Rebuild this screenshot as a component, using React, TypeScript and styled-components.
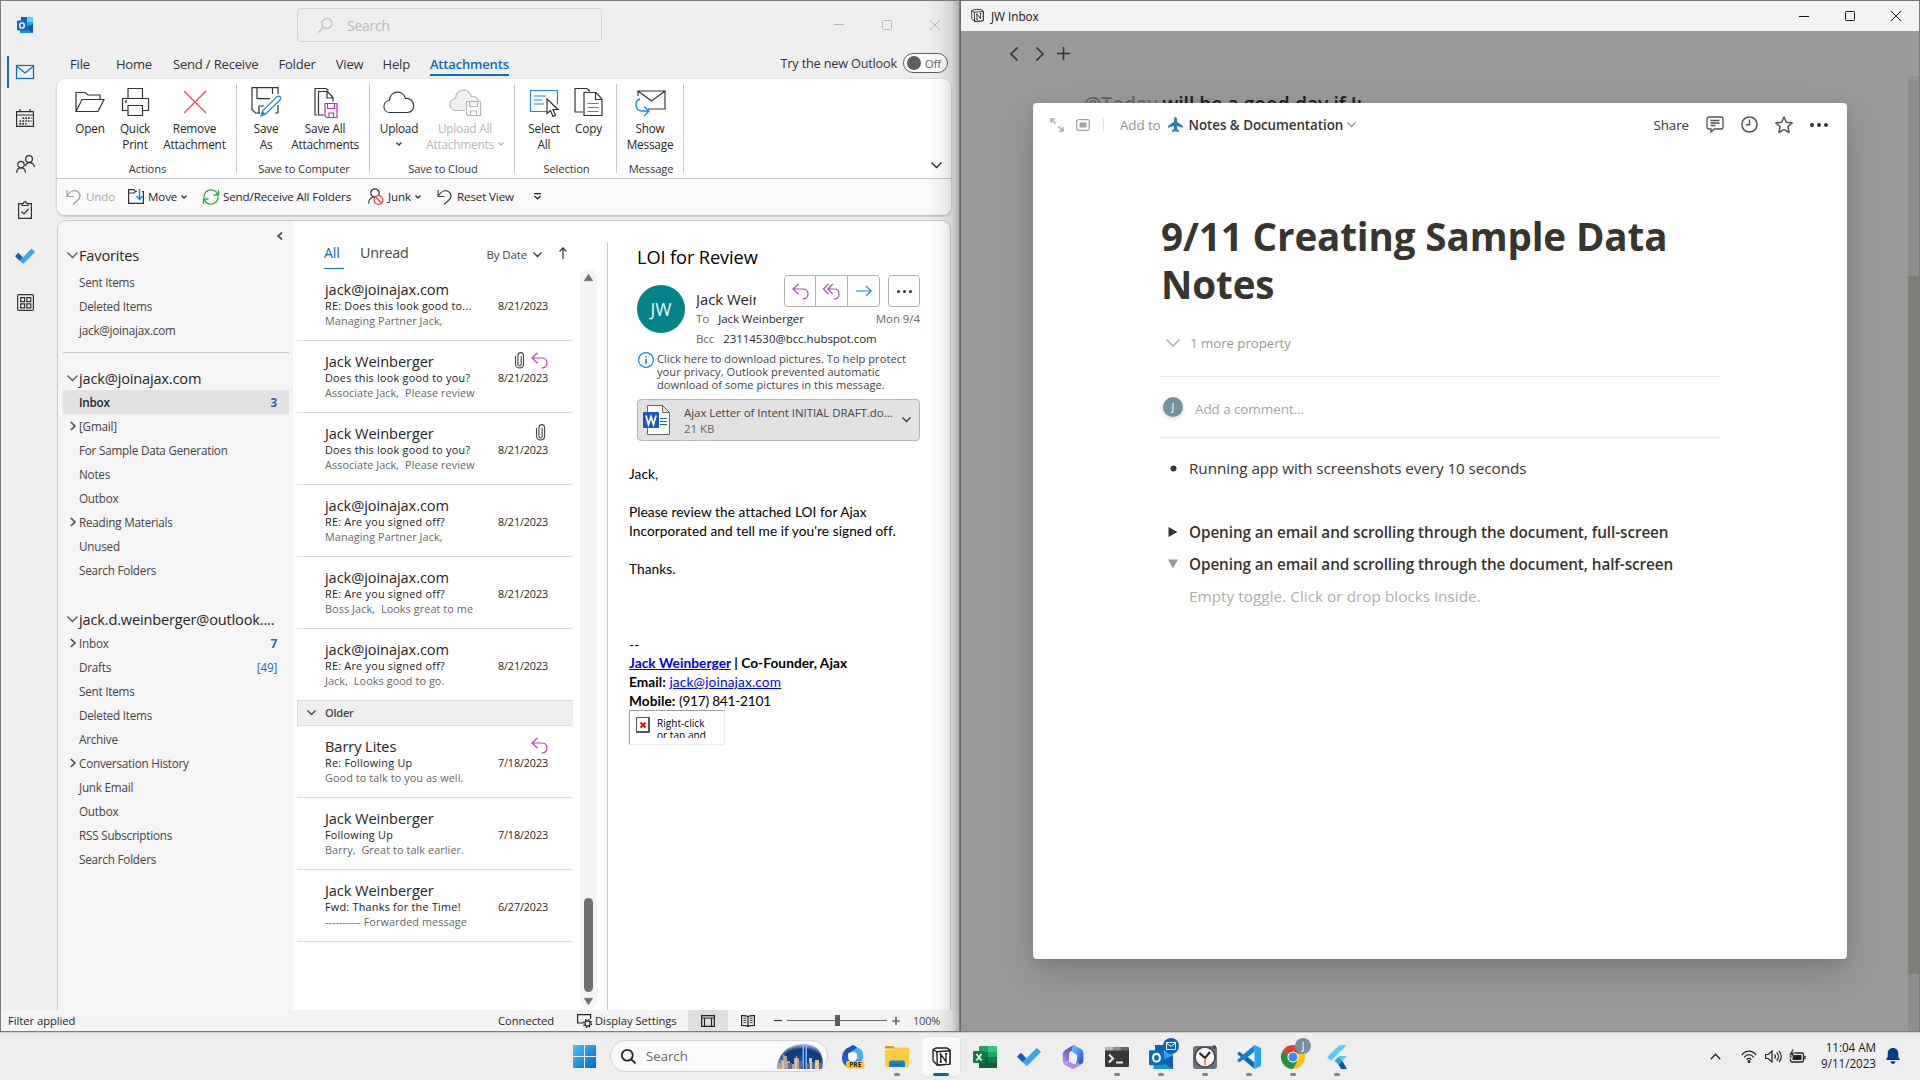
import React from 'react';
import styled, { createGlobalStyle, css } from 'styled-components';

const ui = '"Open Sans", "Noto Sans", sans-serif';

const GlobalStyle = createGlobalStyle`
  * { box-sizing: border-box; }
  body { margin: 0; background: #eee; font-family: ${ui}; overflow: hidden; }
  svg { display: block; overflow: visible; flex: none; }
`;

/* ---------- shell ---------- */

const Desktop = styled.div`
  width: 1920px;
  height: 1080px;
  display: grid;
  grid-template: 1032px 48px / 960px 960px;
  background: #eee;
`;

const OutlookWindow = styled.section`
  position: relative;
  display: grid;
  grid-template: 47px 31px 136px 5px 790px 21px / 56px 1fr;
  height: 1032px;
  background: #efefef;
  border: 1px solid #7b7b7b;
  overflow: hidden;
`;

const EdgeShade = styled.div`
  position: absolute;
  top: 0;
  right: 0;
  bottom: 0;
  width: 36px;
  background: linear-gradient(to right, rgba(0,0,0,0), rgba(0,0,0,.03) 45%, rgba(0,0,0,.11) 80%, rgba(0,0,0,.28));
`;

/* ---------- icons ---------- */

interface IcoProps { w: number; h?: number; c?: string; s?: number; children: React.ReactNode }
const Ico = ({ w, h = w, c = '#333', s = 1, children }: IcoProps) => (
  <svg width={w} height={h} viewBox={`0 0 ${w} ${h}`} fill="none" stroke={c} strokeWidth={s}>{children}</svg>
);

const Chevron = ({ c = '#333', w = 8, s = 1.3 }: { c?: string; w?: number; s?: number }) => (
  <Ico w={w} h={w / 2 + 1} c={c} s={s}><path d={`M.5 .5L${w / 2} ${w / 2}L${w - 0.5} .5`} /></Ico>
);

const Reply = ({ c = '#af4bb5' }: { c?: string }) => (
  <Ico w={17} c={c} s={1.2}><path d="M6.500.8L1 6l5.500 5.200M1 6h9.500c3.300 0 5.500 2 5.500 5s-2 5-5.500 5" /></Ico>
);
const ReplyAll = () => (
  <Ico w={17} c="#af4bb5" s={1.2}><path d="M5.500.8L.5 6l5 5.200M9.800.8L4.800 6l5 5.200M4.800 6h6c3.200 0 5.200 2 5.200 5s-2 5-5.200 5" /></Ico>
);
const Clip = () => (
  <Ico w={9} h={17} c="#444" s={1.1}><path d="M6.200 4v8.200c0 2.400-3.300 2.400-3.300 0V3.500M2.900 4c0-4.500 5.600-4.500 5.600 0v8.300c0 5-8 5-8 0V4" /></Ico>
);
const Undo = ({ c = '#444' }: { c?: string }) => (
  <Ico w={16} h={16} c={c} s={1.2}><path d="M1 1v6.500h6.500M1.200 7C4 2 8 .8 11 2.300c4.500 2.400 3.300 6.700.5 9.200L7 15.500" /></Ico>
);
const TodoCheck = ({ w = 20 }: { w?: number }) => (
  <svg width={w} height={w * 0.8} viewBox="0 0 20 16">
    <path d="M0 8.200L3.300 4.800 8 9.500 4.700 13z" fill="#185abd" />
    <path d="M4.700 12.800L16.500.6 20 4.100 8.100 16z" fill="#3ea3ee" />
  </svg>
);
const OutlookLogo = ({ w = 16 }: { w?: number }) => (
  <svg width={w} height={w} viewBox="0 0 16 16">
    <path d="M4 0h12v11H4z" fill="#28a8ea" /><path d="M10 0h6v5h-6z" fill="#50d9ff" /><path d="M4 0h6v5H4z" fill="#0364b8" />
    <path d="M3 8h13v8H3z" fill="#1490df" /><path d="M16 7v9L8 11z" fill="#0a5fae" />
    <rect y="3.500" width="10" height="10" rx=".8" fill="#0f6cbd" />
    <ellipse cx="5" cy="8.500" rx="2.300" ry="2.600" fill="none" stroke="#fff" strokeWidth="1.400" />
  </svg>
);

/* ---------- outlook title bar ---------- */

const TitleBar = styled.header`
  grid-area: 1 / 1 / 2 / 3;
  display: flex;
  align-items: center;
  padding: 1px 19px 0 16px;
`;
const SearchField = styled.div`
  display: flex;
  align-items: center;
  gap: 14px;
  width: 305px;
  height: 34px;
  margin-left: 264px;
  padding-left: 20px;
  border: 1px solid #d3d3d3;
  border-radius: 4px;
  color: #b9b9b9;
  font-size: 14px;
  letter-spacing: -.25px;
`;
const WindowControls = styled.div<{ $gap: number }>`
  display: flex;
  align-items: center;
  gap: ${p => p.$gap}px;
  margin-left: auto;
`;

const Tabs = styled.nav`
  grid-area: 2 / 2 / 3 / 3;
  display: flex;
  align-items: flex-start;
  height: 31px;
`;
const Tab = styled.span<{ $left: number; $active?: boolean }>`
  margin-left: ${p => p.$left}px;
  height: 28px;
  line-height: 33px;
  font-size: 13px;
  letter-spacing: -.17px;
  color: #333;
  white-space: nowrap;
  ${p => p.$active && css`
    color: #0f6cbd;
    font-weight: 600;
    border-bottom: 2px solid #0f6cbd;
  `}
`;
const TryNew = styled.div`
  display: flex;
  align-items: center;
  gap: 6px;
  margin-left: auto;
  margin-right: 11px;
  height: 30px;
  font-size: 12.700px;
  letter-spacing: -.18px;
  color: #333;
`;
const Toggle = styled.span`
  display: flex;
  align-items: center;
  justify-content: space-between;
  width: 45px;
  height: 20px;
  padding: 0 6px 0 3px;
  border: 1px solid #5c5c5c;
  border-radius: 10px;
  background: #fff;
  font-size: 11.500px;
  color: #666;
  &::before { content: ''; width: 14px; height: 14px; border-radius: 50%; background: #5f5f5f; }
`;

/* ---------- ribbon ---------- */

const Ribbon = styled.div`
  grid-area: 3 / 2 / 4 / 3;
  display: flex;
  flex-direction: column;
  width: 894px;
  height: 136px;
  background: #fff;
  border-radius: 8px;
  box-shadow: 0 1px 3px rgba(0,0,0,.28);
  overflow: hidden;
`;
const RibbonMain = styled.div`
  display: flex;
  height: 100px;
  padding-top: 5px;
  border-bottom: 1px solid #c8c8c8;
`;
const Group = styled.div<{ $w: number; $pad: number }>`
  display: flex;
  flex-direction: column;
  justify-content: space-between;
  width: ${p => p.$w}px;
  height: 89px;
  padding-left: ${p => p.$pad}px;
  border-right: 1px solid #c8c8c8;
  & > footer {
    margin-left: -${p => p.$pad}px;
    margin-bottom: -3px;
    padding-left: 2px;
    text-align: center;
    font-size: 11.200px;
    letter-spacing: -.12px;
    line-height: 14px;
    color: #333;
  }
`;
const Buttons = styled.div`display: flex;`;
const Big = styled.div<{ $w: number; $off?: boolean }>`
  display: flex;
  flex-direction: column;
  align-items: center;
  width: ${p => p.$w}px;
  font-size: 11.800px;
  line-height: 16px;
  letter-spacing: -.2px;
  text-align: center;
  white-space: pre;
  color: ${p => (p.$off ? '#b5b5b5' : '#262626')};
`;
const IconSlot = styled.span`
  display: flex;
  align-items: center;
  justify-content: center;
  height: 36px;
`;
const DropSlot = styled.span`display: flex; height: 16px; align-items: center;`;
const Inline = styled.span`display: flex; align-items: center; gap: 4px;`;
const CollapseRibbon = styled.div`align-self: flex-end; margin: 0 9px 10px auto;`;
const QuickRow = styled.div`
  display: flex;
  align-items: center;
  height: 36px;
  padding: 0 0 1px 9px;
  background: #fafafa;
`;
const Quick = styled.span<{ $w: number; $off?: boolean }>`
  display: flex;
  align-items: center;
  gap: 4px;
  width: ${p => p.$w}px;
  font-size: 11.600px;
  letter-spacing: -.13px;
  white-space: nowrap;
  color: ${p => (p.$off ? '#a8a8a8' : '#262626')};
`;

/* ---------- rail and folder pane ---------- */

const Rail = styled.aside`
  grid-area: 2 / 1 / 6 / 2;
  display: flex;
  flex-direction: column;
  align-items: center;
  width: 56px;
  padding: 8px 10px 0 0;
`;
const RailItem = styled.span<{ $active?: boolean }>`
  display: flex;
  align-items: center;
  justify-content: center;
  width: 34px;
  height: 32px;
  margin-bottom: 14px;
  border-left: 2px solid ${p => (p.$active ? '#0f6cbd' : 'transparent')};
  flex: none;
`;
const Main = styled.div`
  grid-area: 5 / 2 / 6 / 3;
  display: grid;
  grid-template-columns: 235px 314px 1fr;
  width: 894px;
  background: #fff;
  border: 1px solid #c8c8c8;
  border-bottom: none;
  border-radius: 9px 9px 0 0;
  overflow: hidden;
`;
const Folders = styled.nav`
  padding: 11px 4px 0 5px;
  background: #f5f5f5;
`;
const CollapsePane = styled.div`height: 11px; display: flex; justify-content: flex-end; padding-right: 6px;`;
const FolderRow = styled.div<{ $head?: boolean; $sel?: boolean }>`
  display: flex;
  align-items: center;
  height: 24px;
  padding-right: 12px;
  font-size: ${p => (p.$head ? 14.600 : 11.700)}px;
  letter-spacing: ${p => (p.$head ? -0.18 : -0.22)}px;
  color: ${p => (p.$head ? '#262626' : '#444')};
  white-space: nowrap;
  ${p => p.$sel && css`background: #e1e1e1; font-weight: 600; color: #262626;`}
`;
const Twist = styled.span`width: 16px; display: flex; justify-content: center; padding-left: 3px;`;
const Count = styled.span<{ $bold?: boolean }>`
  margin-left: auto;
  color: #1f66b5;
  font-weight: ${p => (p.$bold ? 700 : 400)};
`;
const FolderGap = styled.div<{ $h: number }>`height: ${p => p.$h}px;`;
const FolderRule = styled.div`height: 1px; margin: 10px 0 13px; background: #c9c9c9;`;

/* ---------- message list ---------- */

const ListPane = styled.div`
  display: grid;
  grid-template: 48px 1fr / 280px 34px;
`;
const ListHead = styled.div`
  grid-column: 1 / 3;
  display: flex;
  align-items: flex-start;
  padding: 20px 0 0 31px;
`;
const ListTab = styled.span<{ $active?: boolean }>`
  height: 28px;
  line-height: 23px;
  margin-right: 16px;
  padding-right: 4px;
  font-size: 14.300px;
  letter-spacing: -.2px;
  color: #444;
  ${p => p.$active && css`
    color: #0f6cbd;
    border-bottom: 1px solid #0f6cbd;
    width: 20px;
  `}
`;
const SortBy = styled.span`
  display: flex;
  align-items: center;
  gap: 6px;
  margin: 5px 0 0 58px;
  font-size: 11.500px;
  letter-spacing: -.15px;
  line-height: 17px;
  color: #444;
`;
const SortArrow = styled.span`margin: 6px 0 0 17px;`;
const Messages = styled.div`padding-left: 4px; height: 741px; overflow: hidden;`;
const Message = styled.article`
  display: grid;
  grid-template-columns: 1fr auto;
  align-content: start;
  height: 72px;
  padding: 11px 25px 0 28px;
  border-bottom: 1px solid #dcdcdc;
  white-space: pre;
`;
const From = styled.div`
  height: 19px;
  line-height: 18px;
  font-size: 14.600px;
  letter-spacing: -.08px;
  color: #262626;
`;
const Flags = styled.div`display: flex; gap: 7px; align-items: center; justify-content: flex-end; height: 17px;`;
const ClipSlot = styled.span`
  padding-right: 3px;
  &:not(:last-child) { padding-right: 0; }
`;
const Subject = styled.div`
  height: 15px;
  line-height: 14px;
  font-size: 10.800px;
  font-weight: 500;
  letter-spacing: .26px;
  color: #1a1a1a;
`;
const DateCell = styled.div`
  line-height: 14px;
  font-size: 10.800px;
  letter-spacing: -.12px;
  color: #262626;
`;
const Preview = styled.div`
  grid-column: 1 / 3;
  line-height: 13px;
  font-size: 10.800px;
  letter-spacing: .1px;
  color: #666;
`;
const OlderHead = styled.div`
  display: flex;
  align-items: center;
  gap: 9px;
  height: 26px;
  margin-top: -1px;
  padding: 0 0 1px 9px;
  background: #efefef;
  border: solid #dcdcdc;
  border-width: 1px 0 1px 1px;
  font-size: 11px;
  font-weight: 600;
  letter-spacing: -.2px;
  color: #444;
`;
const ScrollTrack = styled.div`
  display: flex;
  flex-direction: column;
  align-items: center;
  width: 17px;
  height: 740px;
  margin-left: 7px;
  padding: 5px 0 4px;
  border-radius: 8px;
  background: #f4f4f4;
`;
const ScrollThumb = styled.div`width: 9px; height: 94px; margin: auto 0 6px; border-radius: 5px; background: #6f6f6f;`;

/* ---------- reading pane ---------- */

const Reading = styled.div`
  margin-top: 21px;
  padding-left: 21px;
  border-left: 1px solid #c8c8c8;
  color: #262626;
`;
const MailHead = styled.div`width: 291px; padding-left: 8px;`;
const MailTitle = styled.h1`
  margin: 0;
  height: 33px;
  line-height: 31px;
  font-size: 18.200px;
  font-weight: 400;
  letter-spacing: -.1px;
  color: #000;
`;
const Sender = styled.div`display: grid; grid-template-columns: 59px 1fr; height: 74px;`;
const MailAvatar = styled.div`
  display: grid;
  place-items: center;
  width: 48px;
  height: 48px;
  margin-top: 10px;
  border-radius: 50%;
  background: #038387;
  color: #e8f6f6;
  font-size: 17.500px;
`;
const SenderTop = styled.div`display: flex; justify-content: space-between; height: 32px;`;
const SenderName = styled.span`
  width: 60px;
  overflow: hidden;
  white-space: nowrap;
  font-size: 14.800px;
  letter-spacing: 0;
  line-height: 49px;
  height: 40px;
`;
const Actions = styled.div`display: flex; gap: 8px;`;
const ButtonBox = styled.div`
  display: flex;
  height: 32px;
  border: 1px solid #b0b0b0;
  border-radius: 4px;
  & > span { width: 32px; display: grid; place-items: center; border-left: 1px solid #b0b0b0; }
  & > span:first-child { border-left: 0; width: 30px; }
`;
const Field = styled.div<{ $h: number }>`
  display: flex;
  gap: 9px;
  line-height: ${p => p.$h}px;
  font-size: 11.500px;
  letter-spacing: -.06px;
`;
const Muted = styled.span<{ $end?: boolean }>`
  color: #666;
  margin-left: ${p => (p.$end ? 'auto' : '0')};
`;
const InfoBar = styled.div`
  display: flex;
  gap: 3px;
  padding: 3px 0 0 1px;
  font-size: 11.100px;
  line-height: 13px;
  letter-spacing: .04px;
  white-space: pre;
  color: #444;
`;
const Attachment = styled.div`
  display: flex;
  align-items: center;
  width: 283px;
  height: 42px;
  margin-top: 8px;
  padding: 0 8px 0 5px;
  border: 1px solid #b3b3b3;
  border-radius: 4px;
  background: #e1e1e1;
  font-size: 11.500px;
  letter-spacing: -.06px;
  line-height: 16px;
  color: #444;
  white-space: nowrap;
  & > div { margin: 1px auto 0 13px; }
  & small { display: block; font-size: inherit; color: #666; }
`;
const Body = styled.div`
  padding-top: 23px;
  font: 13.700px/19px Lato, "Open Sans", sans-serif;
  letter-spacing: .05px;
  color: #000;
  white-space: pre;
  & a { color: #00f; text-decoration: underline; letter-spacing: .14px; }
  & b, & b a { letter-spacing: .05px; }
`;
const Phone = styled.span`letter-spacing: -.24px;`;
const Signature = styled.div`margin-top: -1px;`;
const BrokenImage = styled.div`
  display: flex;
  gap: 7px;
  width: 96px;
  height: 35px;
  padding: 6px 0 0 6px;
  border: 1px solid #eee;
  border-top-color: #a0a0a0;
  border-left-color: #a0a0a0;
  font: 10px/12px "Open Sans", sans-serif;
  & > p { margin: 0; height: 21px; overflow: hidden; }
`;

/* ---------- outlook status bar ---------- */

const StatusBar = styled.footer`
  grid-area: 6 / 1 / 7 / 3;
  display: flex;
  align-items: center;
  height: 21px;
  padding-left: 7px;
  background: #f4f4f4;
  font-size: 11.200px;
  letter-spacing: -.03px;
  color: #262626;
  white-space: nowrap;
`;
const StatusCell = styled.span<{ $w: number; $gap?: number }>`
  width: ${p => p.$w}px;
  display: flex;
  align-items: center;
  gap: ${p => p.$gap ?? 0}px;
`;
const ViewButton = styled.span<{ $on?: boolean }>`
  display: grid;
  place-items: center;
  width: 40px;
  height: 21px;
  background: ${p => (p.$on ? '#dedede' : 'transparent')};
`;
const Zoom = styled.div`display: flex; align-items: center; gap: 5px; margin-left: 6px;`;
const ZoomTrack = styled.div`
  display: flex;
  align-items: center;
  justify-content: center;
  width: 100px;
  height: 11px;
  background: linear-gradient(#666, #666) center / 100% 1px no-repeat;
  &::before { content: ''; width: 5px; height: 11px; background: #5e5e5e; }
`;
const ZoomText = styled.span`margin-left: 13px; font-size: 11px; letter-spacing: -.2px; color: #444;`;

/* ---------- notion ---------- */

const NotionWindow = styled.section`
  display: grid;
  grid-template-rows: 30px 1fr;
  height: 1032px;
  border: 1px solid #7b7b7b;
  border-left-color: #6a6a6a;
  background: #999;
`;
const NotionTitle = styled.header`
  display: flex;
  align-items: center;
  gap: 7px;
  padding: 0 18px 1px 10px;
  background: #f3f3f3;
  font-size: 11.800px;
  letter-spacing: -.05px;
  color: #111;
`;
const NotionBody = styled.div`
  position: relative;
  display: flex;
  flex-direction: column;
  padding: 16px 0 0 49px;
  overflow: hidden;
`;
const NotionNav = styled.div`
  display: flex;
  align-items: center;
  height: 13px;
  gap: 18px;
  & > svg:last-child { margin-left: -5px; }
`;
const PageBehind = styled.div`
  margin: 30px 0 0 74px;
  height: 30px;
  font-size: 19.300px;
  line-height: 28px;
  font-weight: 600;
  color: #22211f;
  & > span { color: #6c6b69; }
`;
const PageScroll = styled.div`
  position: absolute;
  top: 45px;
  right: 0;
  bottom: 0;
  width: 11px;
  padding-top: 200px;
  background: #8f8f8e;
  &::before { content: ''; display: block; height: 698px; background: #7f7e7a; }
`;
const Modal = styled.article`
  position: absolute;
  left: 72px;
  top: 72px;
  width: 814px;
  height: 856px;
  border-radius: 4px;
  background: #fff;
  box-shadow: 0 0 0 1px rgba(15,15,15,.04), 0 5px 10px rgba(15,15,15,.08), 0 15px 40px rgba(15,15,15,.16);
`;
const ModalBar = styled.div`
  display: flex;
  align-items: center;
  height: 43px;
  padding: 0 19px 0 17px;
  font-size: 13.400px;
  letter-spacing: -.1px;
  color: #37352f;
`;
const BarGap = styled.span`width: 12px;`;
const Divider = styled.span`width: 1px; height: 14px; margin: 0 16px 0 13px; background: #e2e2e0;`;
const AddTo = styled.span`margin-right: 7px; color: #91908c;`;
const Parent = styled.span`margin: 0 4px 0 6px; font-weight: 600; letter-spacing: -.06px;`;
const ModalTools = styled.div`
  display: flex;
  align-items: center;
  margin-left: auto;
  gap: 17px;
`;
const Doc = styled.div`padding: 66px 126px 0 127px; color: #37352f;`;
const DocTitle = styled.h1`
  margin: 0 0 17px 1px;
  font-size: 38.600px;
  line-height: 48px;
  font-weight: 700;
  letter-spacing: -.12px;
`;
const MoreProps = styled.div`
  display: flex;
  align-items: center;
  gap: 10px;
  height: 36px;
  padding: 0 0 1px 6px;
  font-size: 13.300px;
  letter-spacing: -.06px;
  color: #9b9a97;
`;
const Comment = styled.div`
  display: flex;
  align-items: center;
  gap: 12px;
  height: 62px;
  margin-top: 15px;
  padding: 4px 0 0 3px;
  border: solid #e9e9e8;
  border-width: 1px 0;
  font-size: 13.500px;
  letter-spacing: -.1px;
  color: #a5a4a1;
`;
const CommentAvatar = styled.span`
  display: grid;
  place-items: center;
  width: 20px;
  height: 20px;
  margin-top: -4px;
  border-radius: 50%;
  background: #78909c;
  color: #fff;
  font-size: 11px;
  line-height: 18px;
  box-shadow: 0 2px 4px rgba(15,15,15,.15);
`;
const Block = styled.div<{ $bold?: boolean; $faint?: boolean }>`
  display: grid;
  grid-template-columns: 29px 1fr;
  align-items: center;
  height: 32px;
  font-size: 15.300px;
  letter-spacing: ${p => (p.$bold ? -0.09 : p.$faint ? 0.03 : -0.09)}px;
  font-weight: ${p => (p.$bold ? 600 : 400)};
  color: ${p => (p.$faint ? '#aeada9' : '#37352f')};
  white-space: nowrap;
  & > i { display: grid; place-items: center; width: 26px; }
`;
const Blocks = styled.div`padding-top: 14px; display: flex; flex-direction: column;`;
const BlankLine = styled.div`height: 32px;`;

/* ---------- taskbar ---------- */

const Taskbar = styled.footer`
  grid-column: 1 / 3;
  display: flex;
  align-items: center;
  height: 48px;
  padding-left: 573px;
  background: #eee;
  border-top: 1px solid #ccc;
`;
const TaskSearch = styled.div`
  display: flex;
  align-items: center;
  gap: 10px;
  width: 218px;
  height: 32px;
  margin: -1px 3px 0 14px;
  padding: 0 4px 0 10px;
  border: 1px solid #d4d4d4;
  border-radius: 16px;
  background: #fafafa;
  font-size: 13.200px;
  color: #666;
  & > svg:last-child { margin-left: auto; }
`;
const TaskButton = styled.span<{ $on?: boolean }>`
  position: relative;
  display: grid;
  place-items: center;
  width: 38px;
  height: 39px;
  margin: 0 3px;
  border-radius: 4px;
  ${p => p.$on && css`background: #f9f9f9; box-shadow: 0 0 0 1px #e2e2e2;`}
`;
const Indicator = styled.i<{ $on?: boolean }>`
  position: absolute;
  bottom: 0;
  left: 50%;
  width: ${p => (p.$on ? 16 : 6)}px;
  height: 3px;
  margin-left: ${p => (p.$on ? -8 : -3)}px;
  border-radius: 2px;
  background: ${p => (p.$on ? '#0067c0' : '#858585')};
`;
const Badge = styled.i<{ $mail?: boolean }>`
  position: absolute;
  top: 1px;
  right: 1px;
  display: grid;
  place-items: center;
  width: 16px;
  height: 16px;
  border-radius: 50%;
  background: ${p => (p.$mail ? '#0f5fb8' : '#78909c')};
  font: normal 10px ${ui};
  color: #fff;
`;
const Tray = styled.div`display: flex; align-items: center; margin: -1px 0 0 auto; padding-right: 20px;`;
const TrayIcon = styled.span<{ $w: number }>`width: ${p => p.$w}px; display: flex;`;
const Clock = styled.div`
  width: 70px;
  margin: -2px 10px 0 0;
  text-align: right;
  font-size: 11.700px;
  line-height: 16px;
  letter-spacing: -.05px;
  color: #1a1a1a;
`;

/* ---------- data ---------- */

type Folder = { name: string; sub?: boolean; count?: string; bold?: boolean; sel?: boolean };
const favorites: Folder[] = [{ name: 'Sent Items' }, { name: 'Deleted Items' }, { name: 'jack@joinajax.com' }];
const primary: Folder[] = [
  { name: 'Inbox', sel: true, count: '3', bold: true },
  { name: '[Gmail]', sub: true },
  { name: 'For Sample Data Generation' },
  { name: 'Notes' },
  { name: 'Outbox' },
  { name: 'Reading Materials', sub: true },
  { name: 'Unused' },
  { name: 'Search Folders' },
];
const secondary: Folder[] = [
  { name: 'Inbox', sub: true, count: '7', bold: true },
  { name: 'Drafts', count: '[49]' },
  { name: 'Sent Items' },
  { name: 'Deleted Items' },
  { name: 'Archive' },
  { name: 'Conversation History', sub: true },
  { name: 'Junk Email' },
  { name: 'Outbox' },
  { name: 'RSS Subscriptions' },
  { name: 'Search Folders' },
];

type Mail = { from: string; subject: string; preview: string; date: string; clip?: boolean; replied?: boolean };
const recent: Mail[] = [
  { from: 'jack@joinajax.com', subject: 'RE: Does this look good to...', preview: 'Managing Partner Jack,', date: '8/21/2023' },
  { from: 'Jack Weinberger', subject: 'Does this look good to you?', preview: 'Associate Jack,  Please review', date: '8/21/2023', clip: true, replied: true },
  { from: 'Jack Weinberger', subject: 'Does this look good to you?', preview: 'Associate Jack,  Please review', date: '8/21/2023', clip: true },
  { from: 'jack@joinajax.com', subject: 'RE: Are you signed off?', preview: 'Managing Partner Jack,', date: '8/21/2023' },
  { from: 'jack@joinajax.com', subject: 'RE: Are you signed off?', preview: 'Boss Jack,  Looks great to me', date: '8/21/2023' },
  { from: 'jack@joinajax.com', subject: 'RE: Are you signed off?', preview: 'Jack,  Looks good to go.', date: '8/21/2023' },
];
const older: Mail[] = [
  { from: 'Barry Lites', subject: 'Re: Following Up', preview: 'Good to talk to you as well.', date: '7/18/2023', replied: true },
  { from: 'Jack Weinberger', subject: 'Following Up', preview: 'Barry,  Great to talk earlier.', date: '7/18/2023' },
  { from: 'Jack Weinberger', subject: 'Fwd: Thanks for the Time!', preview: '---------- Forwarded message', date: '6/27/2023' },
];

/* ---------- pieces ---------- */

const FolderItem = ({ f }: { f: Folder }) => (
  <FolderRow $sel={f.sel}>
    <Twist>{f.sub && <Ico w={6} h={10} c="#444" s={1.5}><path d="M.8 1L5 5 .8 9" /></Ico>}</Twist>
    {f.name}
    {f.count && <Count $bold={f.bold}>{f.count}</Count>}
  </FolderRow>
);
const FolderHead = ({ name }: { name: string }) => (
  <FolderRow $head><Twist><Chevron w={11} c="#555" /></Twist>{name}</FolderRow>
);
const MailRow = ({ m }: { m: Mail }) => (
  <Message>
    <From>{m.from}</From>
    <Flags>{m.clip && <ClipSlot><Clip /></ClipSlot>}{m.replied && <Reply />}</Flags>
    <Subject>{m.subject}</Subject>
    <DateCell>{m.date}</DateCell>
    <Preview>{m.preview}</Preview>
  </Message>
);

const RibbonView = () => (
  <Ribbon>
    <RibbonMain>
      <Group $w={180} $pad={10}>
        <Buttons>
          <Big $w={46}><IconSlot><Ico w={30} h={26} s={1.2}><path d="M1 22.500V3.500h9l3 2.500h12v4.500M1 22.500l6-12h22l-6 12z" /></Ico></IconSlot>Open</Big>
          <Big $w={44}><IconSlot><Ico w={29} h={30} s={1.2}><path d="M7 11.500V1.500h14.500v10M7 23.500H1.500v-12h26v12H21.500M7 18.500h14.500v10H7z" /><path d="M4 14.500h2" strokeWidth="1.800" /></Ico></IconSlot>{'Quick\nPrint'}</Big>
          <Big $w={75}><IconSlot><Ico w={22} c="#e8474c" s={1.2}><path d="M0 0l22 22M22 0L0 22" /></Ico></IconSlot>{'Remove\nAttachment'}</Big>
        </Buttons>
        <footer>Actions</footer>
      </Group>
      <Group $w={133} $pad={4}>
        <Buttons>
          <Big $w={50}><IconSlot>
            <Ico w={30} h={30} s={1.2}><path d="M9 26H4.500l-3.500-3.500V.6h26V7M27 18v8h-3M6 .6v11h13M21.500 7V.600M8 27v-8h5" /><path d="M10 29l1.500-5L26 9.500c3-1.500 4.500 1.500 3 3.500L14.500 27z" stroke="#1e87d2" fill="#fff" /><path d="M10 29l1.500-5 3 3z" fill="#1e87d2" stroke="none" /></Ico>
          </IconSlot>{'Save\nAs'}</Big>
          <Big $w={68}><IconSlot>
            <Ico w={22} h={31} s={1.2}><path d="M3 28H1V1.500h11l2.500 2M10 28H4.500V4.500h9l5.500 6v4M13 5v6h6" /><g stroke="#a33bab"><path d="M11 16.500h12v14H12.500L11 29zM13.500 16.500v5h7v-5M15 30.500V26h4.500v4.500" fill="#fff" /></g></Ico>
          </IconSlot>{'Save All\nAttachments'}</Big>
        </Buttons>
        <footer>Save to Computer</footer>
      </Group>
      <Group $w={145} $pad={2}>
        <Buttons>
          <Big $w={54}><IconSlot>
            <Ico w={32} h={24} s={1.2}><path d="M7 22.500C-1 22.500-1 11 6.500 10.500 7 0 20-.5 22.500 8.500c10-1 11.500 14 1.500 14z" /></Ico>
          </IconSlot>Upload<DropSlot><Chevron w={6} /></DropSlot></Big>
          <Big $w={78} $off><IconSlot>
            <Ico w={32} h={30} c="#b5b5b5" s={1.2}><path d="M16 23.500H7C-1 23.500-1 12 6.500 11.500 7 1 20 .5 22.500 9.500c5 0 7 2 7 5" fill="#f1f1f1" /><path d="M17.500 14.500h14v14H19L17.500 27zM20.500 14.500v5h8v-5M21.500 28.500v-4.500h6v4.500" fill="#fff" /></Ico>
          </IconSlot>Upload All<Inline>Attachments<Chevron w={6} c="#b5b5b5" /></Inline></Big>
        </Buttons>
        <footer>Save to Cloud</footer>
      </Group>
      <Group $w={102} $pad={4}>
        <Buttons>
          <Big $w={50}><IconSlot>
            <Ico w={30} h={28} s={1.2}><path d="M18 23.500H1.500v-21h27v14M5 8h12M5 12h8M5 16h10" stroke="#1e87d2" /><path d="M18 11v14.500l3.500-3 2.500 6 2.500-1-2.500-6h5z" fill="#fff" /></Ico>
          </IconSlot>{'Select\nAll'}</Big>
          <Big $w={39}><IconSlot>
            <Ico w={29} h={30} s={1.2}><path d="M9 25H1V1.500h12l3 3M10 5.500h12l6 6.500v16.500H10zM21.500 6v6.500H28" /><path d="M13.500 16.500h11M13.500 20.500h11M13.500 24.500h11" stroke="#777" /></Ico>
          </IconSlot>Copy</Big>
        </Buttons>
        <footer>Selection</footer>
      </Group>
      <Group $w={67} $pad={2}>
        <Buttons>
          <Big $w={62}><IconSlot>
            <Ico w={31} h={28} s={1.2}><path d="M3 8V3h27v18H13M3 3l13.500 10L30 3" /><path d="M5 11c-6 2-5 11.500 2 12h6M9 18.500l5 4.500-5 5" stroke="#1e87d2" strokeWidth="1.400" /></Ico>
          </IconSlot>{'Show\nMessage'}</Big>
        </Buttons>
        <footer>Message</footer>
      </Group>
      <CollapseRibbon><Chevron w={11} c="#222" /></CollapseRibbon>
    </RibbonMain>
    <QuickRow>
      <Quick $w={62} $off><Undo c="#9a9a9a" />Undo</Quick>
      <Quick $w={75}><Ico w={16} h={15} s={1.2}><path d="M9 2.500H7.500L6 .6H.6v13.800h14.800V2.500H14M.6 4H6l1.500-1.500" /><path d="M11.500 0v10M8.500 7l3 3.500 3-3.500" stroke="#1e87d2" strokeWidth="1.400" /></Ico>Move<Chevron w={6} /></Quick>
      <Quick $w={165}><Ico w={16} c="#3aa24c" s={1.3}><path d="M.8 9C.5 4 4.500 .8 8 .8c3 0 5.500 1.700 6.600 4.500M15.500 1v5h-5M15.200 7.500c.3 4.500-3.500 7.700-7.200 7.700-3 0-5.500-1.700-6.600-4.500M.5 15v-5h5" /></Ico>Send/Receive All Folders</Quick>
      <Quick $w={69}><Ico w={16} h={17} s={1.2}><circle cx="7" cy="5" r="4.200" /><path d="M.6 15.500C.6 11.500 3 9 7 9" /><circle cx="10.500" cy="12" r="4.400" stroke="#e8474c" fill="#fff" strokeWidth="1.400" /><path d="M7.500 9l6 6" stroke="#e8474c" strokeWidth="1.400" /></Ico>Junk<Chevron w={6} /></Quick>
      <Quick $w={97}><Undo />Reset View</Quick>
      <Ico w={7} h={7} s={1.2} c="#222"><path d="M0 .6h7M.5 3L3.500 6l3-3" /></Ico>
    </QuickRow>
  </Ribbon>
);

const RailView = () => (
  <Rail>
    <RailItem $active><Ico w={18} h={14} c="#0f6cbd" s={1.2}><rect x=".5" y=".5" width="17" height="13" /><path d="M.5 1L9 8l8.500-7" /></Ico></RailItem>
    <RailItem>
      <Ico w={18} h={18} s={1.2}><path d="M.6 2.600h16.800v14.800H.6zM.6 6h16.800M4 0v2.600M14 0v2.600" /><path d="M6.500 9.200h9M3.500 12h12M3.500 14.800h7" strokeWidth="1.700" strokeDasharray="1.700 1.100" /></Ico>
    </RailItem>
    <RailItem>
      <Ico w={19} h={18} s={1.2}><circle cx="13" cy="4" r="3.400" /><path d="M9.500 11c1-4.500 7.500-5 9 1" /><circle cx="5" cy="9.500" r="3.200" /><path d="M.6 17.800c.5-6.500 8.300-6.500 9 0" /></Ico>
    </RailItem>
    <RailItem>
      <Ico w={14} h={18} s={1.2}><path d="M4 2.600H.6v14.800h12.800V2.600H10M4 4.500v-2h1.500c0-2.500 3-2.500 3 0H10v2zM3.500 10.500l2.500 2.500 4.500-5" /></Ico>
    </RailItem>
    <RailItem><TodoCheck /></RailItem>
    <RailItem>
      <Ico w={17} s={1.2}><rect x=".6" y=".6" width="15.800" height="15.800" rx="1.500" /><path d="M3.600 3.600h4v4h-4zM9.800 3.600h4v4h-4zM3.600 9.800h4v4h-4zM9.800 9.800h4v4h-4z" /></Ico>
    </RailItem>
  </Rail>
);

const ScrollArrow = ({ d }: { d: string }) => (
  <svg width="9" height="7" viewBox="0 0 9 7"><path d={d} fill="#6f6f6f" stroke="#6f6f6f" strokeLinejoin="round" strokeWidth=".6" /></svg>
);

const ReadingView = () => (
  <Reading>
    <MailHead>
      <MailTitle>LOI for Review</MailTitle>
      <Sender>
        <MailAvatar>JW</MailAvatar>
        <div>
          <SenderTop>
            <SenderName>Jack Weinberger</SenderName>
            <Actions>
              <ButtonBox><span><Reply /></span><span><ReplyAll /></span><span><Ico w={17} h={12} c="#1e87d2" s={1.2}><path d="M1 6h15M11 .8L16 6l-5 5.200" /></Ico></span></ButtonBox>
              <ButtonBox><span><svg width="15" height="3"><circle cx="1.500" cy="1.500" r="1.500" fill="#333" /><circle cx="7.500" cy="1.500" r="1.500" fill="#333" /><circle cx="13.500" cy="1.500" r="1.500" fill="#333" /></svg></span></ButtonBox>
            </Actions>
          </SenderTop>
          <Field $h={24}><Muted>To</Muted>Jack Weinberger<Muted $end>Mon 9/4</Muted></Field>
          <Field $h={16}><Muted>Bcc</Muted>23114530@bcc.hubspot.com</Field>
        </div>
      </Sender>
      <InfoBar>
        <Ico w={16} c="#1e87d2" s={1.2}><circle cx="8" cy="8" r="7.400" /><path d="M8 7v5M8 4v1.600" strokeWidth="1.700" /></Ico>
        {'Click here to download pictures. To help protect\nyour privacy, Outlook prevented automatic\ndownload of some pictures in this message.'}
      </InfoBar>
      <Attachment>
        <svg width="28" height="30" viewBox="0 0 28 30">
          <path d="M4.500.5h15l7 7v22h-22zM19.500.5v7h7" fill="#fff" stroke="#666" />
          <path d="M17 13.500h7M17 16.500h7M17 19.500h7" stroke="#185abd" />
          <rect y="7" width="16" height="16" rx="1" fill="#185abd" />
          <path d="M3 10.500l2.500 9L8 11.500l2.500 8 2.500-9" fill="none" stroke="#fff" strokeWidth="1.700" />
        </svg>
        <div>Ajax Letter of Intent INITIAL DRAFT.do...<small>21 KB</small></div>
        <Chevron w={9} s={1.5} c="#444" />
      </Attachment>
    </MailHead>
    <Body>
      {"Jack,\n\nPlease review the attached LOI for Ajax\nIncorporated and tell me if you're signed off.\n\nThanks.\n\n\n\n--"}
      <Signature>
        <b><a>Jack Weinberger</a> | Co-Founder, Ajax</b>{'\n'}
        <b>Email:</b> <a>jack@joinajax.com</a>{'\n'}
        <b>Mobile:</b> <Phone>(917) 841-2101</Phone>
      </Signature>
      <BrokenImage>
        <svg width="14" height="16" viewBox="0 0 14 16"><path d="M.5 15.500V.5h13" fill="none" stroke="#555" /><path d="M13 .5v14.500H.5" fill="none" stroke="#222" strokeWidth="1.500" /><path d="M4.500 5.500l5 5M9.500 5.500l-5 5" stroke="#e00" strokeWidth="1.800" /></svg>
        <p>{'Right-click\nor tap and'}</p>
      </BrokenImage>
    </Body>
  </Reading>
);

const Outlook = () => (
  <OutlookWindow>
    <TitleBar>
      <OutlookLogo w={16} />
      <SearchField>
        <Ico w={15} c="#bdbdbd" s={1.2}><circle cx="9" cy="5.500" r="5" /><path d="M5.500 9L.5 14.500" /></Ico>
        Search
      </SearchField>
      <WindowControls $gap={38}>
        <Ico w={10} c="#b9b9b9"><path d="M0 4.500h10" /></Ico>
        <Ico w={10} c="#b9b9b9"><rect x=".5" y=".5" width="9" height="9" rx="1" /></Ico>
        <Ico w={10} c="#b9b9b9"><path d="M0 0l10 10M10 0L0 10" /></Ico>
      </WindowControls>
    </TitleBar>

    <Tabs>
      <Tab $left={13}>File</Tab>
      <Tab $left={26}>Home</Tab>
      <Tab $left={21}>Send / Receive</Tab>
      <Tab $left={20}>Folder</Tab>
      <Tab $left={20}>View</Tab>
      <Tab $left={19}>Help</Tab>
      <Tab $left={20} $active>Attachments</Tab>
      <TryNew>Try the new Outlook<Toggle>Off</Toggle></TryNew>
    </Tabs>

    <RailView />
    <RibbonView />

    <Main>
      <Folders>
        <CollapsePane><Ico w={6} h={8} c="#555" s={1.8}><path d="M5 .5L1.200 4 5 7.500" /></Ico></CollapsePane>
        <FolderHead name="Favorites" />
        <FolderGap $h={3} />
        {favorites.map(f => <FolderItem key={f.name} f={f} />)}
        <FolderRule />
        <FolderHead name="jack@joinajax.com" />
        {primary.map(f => <FolderItem key={f.name} f={f} />)}
        <FolderGap $h={25} />
        <FolderHead name="jack.d.weinberger@outlook...." />
        {secondary.map(f => <FolderItem key={f.name} f={f} />)}
      </Folders>

      <ListPane>
        <ListHead>
          <ListTab $active>All</ListTab>
          <ListTab>Unread</ListTab>
          <SortBy>By Date <Chevron w={9} /></SortBy>
          <SortArrow><Ico w={8} h={12} s={1.2}><path d="M4 12V1M.5 4.500L4 .8l3.500 3.700" /></Ico></SortArrow>
        </ListHead>
        <Messages>
          {recent.map((m, i) => <MailRow key={i} m={m} />)}
          <OlderHead><Chevron w={9} c="#444" />Older</OlderHead>
          {older.map((m, i) => <MailRow key={i} m={m} />)}
        </Messages>
        <ScrollTrack>
          <ScrollArrow d="M4.500 .3L8.700 6.700H.3z" />
          <ScrollThumb />
          <ScrollArrow d="M4.500 6.700L8.700 .3H.3z" />
        </ScrollTrack>
      </ListPane>

      <ReadingView />
    </Main>

    <StatusBar>
      <StatusCell $w={490}>Filter applied</StatusCell>
      <StatusCell $w={79}>Connected</StatusCell>
      <StatusCell $w={111} $gap={3}>
        <Ico w={15} h={14} c="#222" s={1.2}><path d="M6 9H.6V.6h13V5" /><circle cx="10.500" cy="9.500" r="2.600" /><circle cx="10.500" cy="9.500" r="3.900" strokeDasharray="1.600 1.460" strokeWidth="1.400" /></Ico>
        Display Settings
      </StatusCell>
      <ViewButton $on><Ico w={14} h={12} c="#222" s={1.2}><path d="M.6.6h12.800v10.800H.6zM.6 3h12.800M3.500 3v8.400M10.500 3v8.400" /></Ico></ViewButton>
      <ViewButton><Ico w={14} h={12} c="#222" s={1.2}><path d="M7 1.500C5 .3 2.500.6.6.6v9.800c2 0 4.500 0 6.400 1 2-1 4.400-1 6.400-1V.6C11.500.6 9 .3 7 1.500zM7 1.500v10" /><path d="M2.300 3.200h3M2.300 5.400h3M2.300 7.600h3M8.700 3.200h3M8.700 5.400h3M8.700 7.600h3" strokeWidth=".9" /></Ico></ViewButton>
      <Zoom>
        <Ico w={8} s={1.2}><path d="M0 3.500h8" /></Ico>
        <ZoomTrack />
        <Ico w={8} s={1.2}><path d="M0 4h8M4 0v8" /></Ico>
      </Zoom>
      <ZoomText>100%</ZoomText>
    </StatusBar>
    <EdgeShade />
  </OutlookWindow>
);

const NotionMark = ({ w = 14 }: { w?: number }) => (
  <svg width={w} height={w} viewBox="0 0 18 18">
    <path d="M1 2.500L3.500 1 14 .8l3 2.200v13.200l-12.200.9L1 13z" fill="#fff" stroke="#222" strokeWidth="1.300" strokeLinejoin="round" />
    <path d="M4.600 4.500L17 3.500v12.700l-12 .9z" fill="#fff" stroke="#222" strokeWidth="1.300" strokeLinejoin="round" />
    <path d="M1 2.500l3.700 2" stroke="#222" strokeWidth="1.300" />
    <path d="M8.300 14.200V7l5 6.800V6.300M7.200 7h1.600M12.300 6.300h2.200M7.200 14.300h2.300" fill="none" stroke="#222" strokeWidth="1.300" />
  </svg>
);

const Notion = () => (
  <NotionWindow>
    <NotionTitle>
      <NotionMark w={13} />
      JW Inbox
      <WindowControls $gap={36}>
        <Ico w={10} c="#111"><path d="M0 5.500h10" /></Ico>
        <Ico w={10} c="#111"><rect x=".5" y=".5" width="9" height="9" rx="1" /></Ico>
        <Ico w={10} c="#111"><path d="M0 0l10 10M10 0L0 10" /></Ico>
      </WindowControls>
    </NotionTitle>
    <NotionBody>
      <NotionNav>
        <Ico w={8} h={14} s={1.6}><path d="M7.500.5L1 7l6.500 6.500" /></Ico>
        <Ico w={8} h={14} s={1.6}><path d="M.5.5L7 7 .5 13.500" /></Ico>
        <Ico w={13} s={1.6}><path d="M6.500 0v13M0 6.500h13" /></Ico>
      </NotionNav>
      <PageBehind><span>@Today</span> will be a good day if I:</PageBehind>
      <PageScroll />
      <Modal>
        <ModalBar>
          <Ico w={14} h={14} c="#a3a29e" s={1.3}><path d="M5.500 5.500L1 1M1 5V.8h4.200M8.500 8.500L13 13M13 9v4.200H8.800" /></Ico>
          <BarGap />
          <Ico w={14} h={12} c="#a3a29e" s={1.3}><rect x=".7" y=".7" width="12.600" height="10.600" rx="1.500" /><rect x="3.500" y="3.500" width="7" height="5" fill="#a3a29e" stroke="none" /></Ico>
          <Divider />
          <AddTo>Add to</AddTo>
          <svg width="15" height="15" viewBox="0 0 15 15"><path d="M7.500 0c.9 0 1.500 1.200 1.500 2.600v2.200l6 4.200v1.700L9 9v2.900l2 1.600V15l-3.500-.8L4 15v-1.500l2-1.600V9l-6 1.700V9l6-4.200V2.600C6 1.200 6.600 0 7.500 0z" fill="#337ea9" /></svg>
          <Parent>Notes &amp; Documentation</Parent>
          <Chevron w={9} c="#91908c" />
          <ModalTools>
            <span>Share</span>
            <Ico w={18} h={17} c="#555450" s={1.5}><path d="M3 1h12c1.300 0 2 .7 2 2v8c0 1.300-.7 2-2 2H8.500L5 16v-3H3c-1.300 0-2-.7-2-2V3c0-1.300.7-2 2-2zM4.500 4.500h9M4.500 7h9M4.500 9.500h5" strokeWidth="1.300" /></Ico>
            <Ico w={17} c="#555450" s={1.5}><circle cx="8.500" cy="8.500" r="7.600" /><path d="M8.500 3.500v5.200H5" /></Ico>
            <Ico w={18} h={17} c="#555450" s={1.5}><path d="M9 1l2.400 5.300 5.800.6-4.300 3.900 1.200 5.700L9 13.600l-5.100 2.900 1.200-5.700L.8 6.900l5.800-.6z" strokeLinejoin="round" /></Ico>
            <svg width="18" height="4"><circle cx="2" cy="2" r="2" fill="#37352f" /><circle cx="9" cy="2" r="2" fill="#37352f" /><circle cx="16" cy="2" r="2" fill="#37352f" /></svg>
          </ModalTools>
        </ModalBar>
        <Doc>
          <DocTitle>9/11 Creating Sample Data Notes</DocTitle>
          <MoreProps><Chevron w={14} c="#a5a4a1" />1 more property</MoreProps>
          <Comment><CommentAvatar>J</CommentAvatar>Add a comment...</Comment>
          <Blocks>
            <Block><i><svg width="7" height="7"><circle cx="3.500" cy="3.500" r="3" fill="#37352f" /></svg></i>Running app with screenshots every 10 seconds</Block>
            <BlankLine />
            <Block $bold><i><svg width="10" height="10"><path d="M.5 0v10L9.500 5z" fill="#37352f" /></svg></i>Opening an email and scrolling through the document, full-screen</Block>
            <Block $bold><i><svg width="10" height="10"><path d="M0 .5h10L5 9.500z" fill="#9b9a97" /></svg></i>Opening an email and scrolling through the document, half-screen</Block>
            <Block $faint><i />Empty toggle. Click or drop blocks inside.</Block>
          </Blocks>
        </Doc>
      </Modal>
    </NotionBody>
  </NotionWindow>
);

const Skyline = () => (
  <svg width="46" height="25" viewBox="0 0 46 25">
    <defs>
      <radialGradient id="night" cx=".55" cy=".6" r=".6"><stop offset="0" stopColor="#0a4fa8" /><stop offset=".65" stopColor="#0d3a78" /><stop offset="1" stopColor="#b9cde3" /></radialGradient>
      <clipPath id="dome"><path d="M0 25v-5C4 6 14 0 27 0s18 8 19 18l-1 7z" /></clipPath>
    </defs>
    <g clipPath="url(#dome)">
      <rect width="46" height="25" fill="url(#night)" />
      <path d="M25.500 0h1.500v25h-1.500zM28.500 0h1.500v25h-1.500z" fill="#8db4ff" />
      <path d="M0 19h4v-3h2v-5h1.500V9v3H10v5h3v3h4v-6h2v-2h1v2h2v6h3v5H0z" fill="#b5a594" />
      <path d="M5 17h2v8H5zM18 15h2v10h-2zM32 14h3v11h-3zM38 16h4v9h-4z" fill="#d8c6a6" />
      <path d="M11 19h4v6h-4zM22 17h3v8h-3zM30 19h3v6h-3zM35 18h3v7h-3zM42 19h4v6h-4z" fill="#5d6d88" />
    </g>
  </svg>
);

const TaskIcon = ({ children, on, dot, badge }: { children: React.ReactNode; on?: boolean; dot?: boolean; badge?: React.ReactNode }) => (
  <TaskButton $on={on}>{children}{(on || dot) && <Indicator $on={on} />}{badge}</TaskButton>
);

const TaskbarView = () => (
  <Taskbar>
    <svg width="23" height="23" viewBox="0 0 23 23">
      <defs><linearGradient id="win" x2="1" y2="1"><stop stopColor="#4cc2ff" /><stop offset="1" stopColor="#0067c5" /></linearGradient></defs>
      <path d="M0 0h11v11H0zM12 0h11v11H12zM0 12h11v11H0zM12 12h11v11H12z" fill="url(#win)" />
    </svg>
    <TaskSearch>
      <Ico w={15} c="#222" s={1.8}><circle cx="6.300" cy="6.300" r="5.400" /><path d="M10.300 10.300l4.200 4.200" /></Ico>
      Search
      <Skyline />
    </TaskSearch>
    <TaskIcon>
      <svg width="24" height="24" viewBox="0 0 24 24">
        <path d="M12 1L5 4C2 6 1 9 1 13c0 4 1.500 7 5 9l5-3-4-6 1-4 5-1z" fill="#1f62d8" />
        <path d="M5 4l7-4 8 4.500c2 2.500 2.600 6 2 9.500l-6-1.500-1-4-4-2-6 2z" fill="#3fb4ee" />
        <path d="M5 4l7-4 4 2.500-8 6-4 3C3 8 3.500 6 5 4z" fill="#1a4fb5" />
        <path d="M22 12l-2 7-8 4-6-2 4-6 5-1z" fill="#4f9af5" />
        <path d="M11.500 6.500l4.300 1.700v4c0 2.300-1.800 3.800-4.300 4.800-2.500-1-4.300-2.500-4.300-4.800v-4z" fill="#fff" />
        <rect x="5" y="16" width="18.500" height="7.500" rx="2" fill="#ffc61a" />
        <text x="14.300" y="22.300" textAnchor="middle" fontFamily="Open Sans" fontWeight="700" fontSize="6.500" fill="#222">PRE</text>
      </svg>
    </TaskIcon>
    <TaskIcon dot>
      <svg width="24" height="22" viewBox="0 0 24 22"><path d="M0 1.500C0 .7.500 0 1.500 0h6.500l2.500 2.500H0z" fill="#d9950c" /><path d="M0 4l9-1 1.500-1.500H22.500c1 0 1.500.7 1.500 1.500v17c0 .7-.6 1-1.500 1h-21C.6 21 0 20.700 0 20z" fill="#ffcb3d" /><path d="M4 21v-4c0-1.700 1-2.500 2.500-2.500h11c1.500 0 2.500.8 2.500 2.500v4z" fill="#1381d6" /><path d="M8 18h8v1H8z" fill="#0b5aa6" /></svg>
    </TaskIcon>
    <TaskIcon on><NotionMark w={19} /></TaskIcon>
    <TaskIcon>
      <svg width="24" height="22" viewBox="0 0 24 22"><rect x="6" width="18" height="22" rx="1" fill="#21a366" /><path d="M15 0h8c.6 0 1 .4 1 1v5h-9z" fill="#33c481" /><path d="M6 6h9v5H6z" fill="#107c41" /><path d="M6 11h18v10c0 .6-.4 1-1 1H6z" fill="#185c37" /><path d="M15 11h9v5.500h-9z" fill="#107c41" /><rect y="5" width="12" height="12" rx="1" fill="#107c41" /><path d="M3.500 8l5 6.500M8.500 8l-5 6.500" stroke="#fff" strokeWidth="1.600" /></svg>
    </TaskIcon>
    <TaskIcon><TodoCheck w={24} /></TaskIcon>
    <TaskIcon>
      <svg width="22" height="24" viewBox="0 0 22 24">
        <defs>
          <linearGradient id="m1" x1=".7" x2="0" y2="1"><stop stopColor="#5548b5" /><stop offset=".6" stopColor="#7f72dd" /><stop offset="1" stopColor="#b79bf5" /></linearGradient>
          <linearGradient id="m2" x2=".7" y2="1"><stop stopColor="#6fd0f8" /><stop offset=".5" stopColor="#4b8fe8" /><stop offset="1" stopColor="#2b49b8" /></linearGradient>
        </defs>
        <path d="M12 0L3.500 4.800C1.500 6 .8 7.500 .8 9.500v6c0 1.500.7 2.500 2 3L7 16V9.500c0-1.500.7-2.500 2-3.200L14.500 3z" fill="url(#m1)" />
        <path d="M12 0l7 4c1.600 1 2.400 2.500 2.400 4.500v6.500c0 2-.8 3.200-2.400 4.200l-6 3.500 2-8V10l-4.500-3c-1.500-3-.5-5.500 1.500-7z" fill="url(#m2)" />
        <path d="M1.500 17.800c2 1.200 4 .3 5.500-1.300l4 2.200c2 .8 3.500-.2 4.300-1.500l3.500 2.600-5.300 3.200c-1.700 1-3 1-4.500.2l-6-3.400c-.8-.5-1.300-1.200-1.500-2z" fill="#b985ee" />
        <path d="M11 7.800l4 2.300v4.800L11 17l-4-2.300v-4.600z" fill="#eee" />
      </svg>
    </TaskIcon>
    <TaskIcon dot>
      <svg width="24" height="20" viewBox="0 0 24 20"><rect width="24" height="20" rx="1.500" fill="#383838" /><path d="M0 1.500C0 .6.600 0 1.500 0H8v3.500H0z" fill="#b5b5b5" /><path d="M8 0h8v3.500H8z" fill="#8a8a8a" /><path d="M16 0h6.500c1 0 1.500.6 1.500 1.500v2h-8z" fill="#666" /><path d="M4 7.500l4 4-4 4M11 15.500h7" fill="none" stroke="#eee" strokeWidth="2" /></svg>
    </TaskIcon>
    <TaskIcon dot badge={<Badge $mail><Ico w={10} h={8} c="#fff"><path d="M.5.5h9v7h-9zM.5 1L5 4.500 9.500 1" /></Ico></Badge>}><OutlookLogo w={24} /></TaskIcon>
    <TaskIcon dot>
      <svg width="24" height="24" viewBox="0 0 24 24"><rect y="1" width="24" height="23" rx="3" fill="#68737c" /><path d="M19 1l3-1 1.500 3-2 1z" fill="#3f474d" /><circle cx="12" cy="12" r="10" fill="#f3f3f3" stroke="#3f474d" strokeWidth="1.500" /><path d="M6.500 8l5.500 5 5-6" fill="none" stroke="#222" strokeWidth="2" /><path d="M12 13v7" stroke="#e8602c" strokeWidth="1.400" /></svg>
    </TaskIcon>
    <TaskIcon dot>
      <svg width="24" height="24" viewBox="0 0 24 24">
        <path d="M17.500 0l-11 9.800L2.500 6.700.5 7.700v1.600L17.500 24v-6.500L7 9z" fill="#0a6cb8" />
        <path d="M17.500 24l-11-9.800-4 3.100-2-1v-1.600L17.500 0v6.500L7 15z" fill="#1182cf" />
        <path d="M17.500 0L24 3v18l-6.500 3z" fill="#27a5ee" />
      </svg>
    </TaskIcon>
    <TaskIcon dot badge={<Badge>J</Badge>}>
      <svg width="24" height="24" viewBox="0 0 24 24"><circle cx="12" cy="12" r="12" fill="#fbc116" /><path d="M12 12L1.600 6A12 12 0 0 1 22.400 6z" fill="#e33b2e" /><path d="M12 12L1.600 6A12 12 0 0 0 12 24l5-9z" fill="#229342" /><circle cx="12" cy="12" r="5.600" fill="#fff" /><circle cx="12" cy="12" r="4.500" fill="#4285f4" /></svg>
    </TaskIcon>
    <TaskIcon dot>
      <svg width="20" height="24" viewBox="0 0 20 24"><path d="M12.500 0H20L4 15.800.2 12z" fill="#5fc9f8" /><path d="M12.500 11H20l-8.500 8.500-3.800-3.700z" fill="#5fc9f8" /><path d="M7.700 15.800l3.800-3.700 3.800 3.700-3.800 3.700z" fill="#29a4e0" /><path d="M11.500 19.500l3.800-3.700L20 24h-6z" fill="#0b5a9d" /></svg>
    </TaskIcon>
    <Tray>
      <TrayIcon $w={31}><Ico w={11} h={7} c="#222" s={1.3}><path d="M.8 6.200L5.500 1.200l4.700 5" /></Ico></TrayIcon>
      <TrayIcon $w={24}><Ico w={16} h={13} c="#222" s={1.2}><path d="M.8 5C5-.2 11-.2 15.200 5M3.200 7.300c2.800-3.500 6.800-3.500 9.600 0M5.600 9.600c1.500-1.700 3.300-1.700 4.800 0" /><circle cx="8" cy="11.600" r=".9" fill="#222" /></Ico></TrayIcon>
      <TrayIcon $w={24}><Ico w={17} h={13} c="#222" s={1.2}><path d="M.6 4.500h2.500L7 1v11L3.100 8.500H.6zM9.500 4.500c1 1.200 1 2.800 0 4M11.700 2.500c2.200 2.300 2.200 5.700 0 8M13.900.8c3.200 3.300 3.200 8.100 0 11.400" /></Ico></TrayIcon>
      <TrayIcon $w={17}><Ico w={17} h={13} c="#222" s={1.3}><rect x="1.500" y="3" width="13" height="9" rx="1.500" /><rect x="3.500" y="5" width="9" height="5" fill="#222" stroke="none" /><path d="M16 6v3" /><path d="M3.500-1L0 5h2.500L1.500 9 6 3H3.500L5-1z" fill="#222" stroke="#eee" strokeWidth=".6" /></Ico></TrayIcon>
      <Clock>11:04 AM<br />9/11/2023</Clock>
      <svg width="14" height="16" viewBox="0 0 14 16"><path d="M7 0c3.300 0 5.300 2.300 5.300 5.300v3.500L14 12H0l1.700-3.200V5.300C1.700 2.300 3.700 0 7 0zM4.500 13.200h5C9.200 15 8.300 16 7 16s-2.200-1-2.500-2.800z" fill="#003e92" /></svg>
    </Tray>
  </Taskbar>
);

export default function App() {
  return (
    <Desktop>
      <GlobalStyle />
      <Outlook />
      <Notion />
      <TaskbarView />
    </Desktop>
  );
}
